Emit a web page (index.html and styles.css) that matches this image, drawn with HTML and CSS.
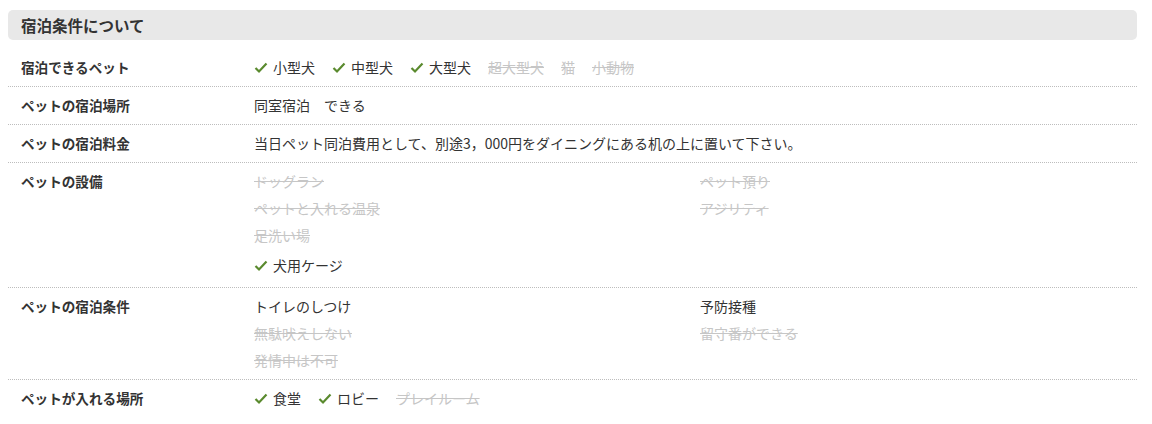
FILE: index.html
```html
<!DOCTYPE html>
<html lang="ja">
<head>
<meta charset="utf-8">
<link rel="stylesheet" href="styles.css">
</head>
<body>
<div class="section">
  <h2 class="heading">宿泊条件について</h2>
  <div class="rows">
    <div class="row">
      <div class="label">宿泊できるペット</div>
      <div class="value inline">
        <span class="item on"><svg class="chk" viewBox="0 0 14 12"><polyline points="1.5,6 5,9.5 12.5,1.5"/></svg>小型犬</span>
        <span class="item on"><svg class="chk" viewBox="0 0 14 12"><polyline points="1.5,6 5,9.5 12.5,1.5"/></svg>中型犬</span>
        <span class="item on"><svg class="chk" viewBox="0 0 14 12"><polyline points="1.5,6 5,9.5 12.5,1.5"/></svg>大型犬</span>
        <span class="item off">超大型犬</span>
        <span class="item off">猫</span>
        <span class="item off">小動物</span>
      </div>
    </div>
    <div class="row">
      <div class="label">ペットの宿泊場所</div>
      <div class="value">同室宿泊　できる</div>
    </div>
    <div class="row">
      <div class="label">ペットの宿泊料金</div>
      <div class="value">当日ペット同泊費用として、別途3，000円をダイニングにある机の上に置いて下さい。</div>
    </div>
    <div class="row">
      <div class="label">ペットの設備</div>
      <div class="value cols">
        <div class="col">
          <span class="item off">ドッグラン</span>
          <span class="item off">ペットと入れる温泉</span>
          <span class="item off">足洗い場</span>
          <span class="item on"><svg class="chk" viewBox="0 0 14 12"><polyline points="1.5,6 5,9.5 12.5,1.5"/></svg>犬用ケージ</span>
        </div>
        <div class="col">
          <span class="item off">ペット預り</span>
          <span class="item off">アジリティ</span>
        </div>
      </div>
    </div>
    <div class="row">
      <div class="label">ペットの宿泊条件</div>
      <div class="value cols">
        <div class="col">
          <span class="item">トイレのしつけ</span>
          <span class="item off">無駄吠えしない</span>
          <span class="item off">発情中は不可</span>
        </div>
        <div class="col">
          <span class="item">予防接種</span>
          <span class="item off">留守番ができる</span>
        </div>
      </div>
    </div>
    <div class="row last">
      <div class="label">ペットが入れる場所</div>
      <div class="value inline">
        <span class="item on"><svg class="chk" viewBox="0 0 14 12"><polyline points="1.5,6 5,9.5 12.5,1.5"/></svg>食堂</span>
        <span class="item on"><svg class="chk" viewBox="0 0 14 12"><polyline points="1.5,6 5,9.5 12.5,1.5"/></svg>ロビー</span>
        <span class="item off">プレイルーム</span>
      </div>
    </div>
  </div>
</div>
</body>
</html>
```

FILE: styles.css
```css
html, body {
  margin: 0;
  padding: 0;
  background: #fff;
}
body {
  padding: 10px 8px 0 8px;
  font-family: "Noto Sans CJK JP", "Noto Sans", sans-serif;
  font-size: 14px;
  color: #333;
}
.section {
  width: 1129px;
}
.heading {
  margin: 0;
  height: 30px;
  line-height: 30px;
  padding: 0 13px;
  background: #e8e8e8;
  border-radius: 5px;
  font-size: 15.5px;
  font-weight: bold;
  color: #333;
}
.rows {
  margin-top: 9px;
}
.row {
  display: grid;
  grid-template-columns: 233px 1fr;
  padding: 5px 0 5px 13px;
  border-bottom: 1px dotted #bdbdbd;
  line-height: 27px;
}
.row.last {
  border-bottom: none;
}
.label {
  font-weight: bold;
  font-size: 13.6px;
  color: #333;
}
.value.inline {
  display: flex;
  gap: 17px;
}
.value.cols {
  display: grid;
  grid-template-columns: 446px 1fr;
}
.col {
  display: flex;
  flex-direction: column;
}
.item {
  display: inline-flex;
  align-items: center;
}
.item.off {
  color: #c6c6c6;
  text-decoration: line-through;
}
.col .item {
  align-self: flex-start;
}
.col .item.on {
  padding: 3px 0;
}
.chk {
  width: 14px;
  height: 12px;
  margin-right: 5px;
  fill: none;
  stroke: #5a8a2e;
  stroke-width: 2.2;
}
```
